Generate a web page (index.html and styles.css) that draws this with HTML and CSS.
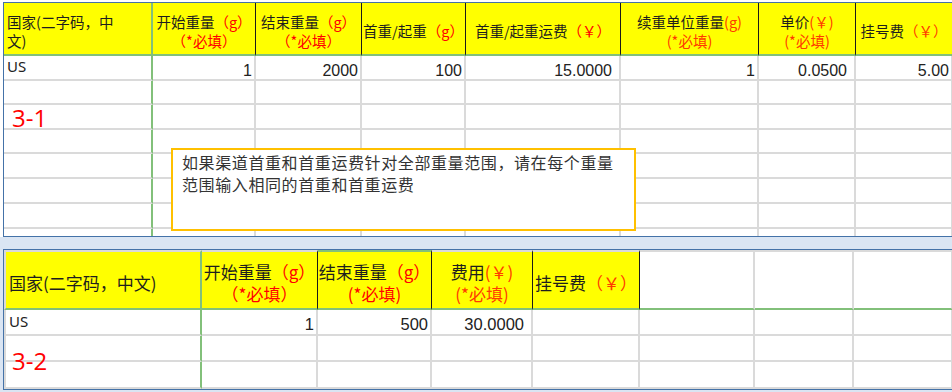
FILE: index.html
```html
<!DOCTYPE html>
<html lang="zh-CN">
<head>
<meta charset="utf-8">
<title>运费表</title>
<link rel="stylesheet" href="styles.css">
</head>
<body>
<div class="top-wrap">
  <div class="sheet sheet-1">
    <div class="grid grid-1">
      <div class="h first"><div class="ht"><div class="ln">国家(二字码，中</div><div class="ln">文)</div></div></div>
      <div class="h"><div class="ht"><div class="ln">开始重量<span class="r">（g）</span></div><div class="ln r">（*必填）</div></div></div>
      <div class="h"><div class="ht"><div class="ln">结束重量<span class="r">（g）</span></div><div class="ln r">（*必填）</div></div></div>
      <div class="h"><div class="ht"><div class="ln">首重/起重<span class="r">（g）</span></div></div></div>
      <div class="h"><div class="ht"><div class="ln">首重/起重运费<span class="r">（￥）</span></div></div></div>
      <div class="h"><div class="ht"><div class="ln">续重单位重量<span class="o">(g)</span></div><div class="ln o">(*必填)</div></div></div>
      <div class="h"><div class="ht"><div class="ln">单价<span class="o">(￥)</span></div><div class="ln o">(*必填)</div></div></div>
      <div class="h"><div class="ht"><div class="ln">挂号费<span class="o">（￥）</span></div></div></div>

      <div class="c g txt">US</div><div class="c n">1</div><div class="c n">2000</div><div class="c n">100</div><div class="c n dec">15.0000</div><div class="c n">1</div><div class="c n dec">0.0500</div><div class="c n">5.00</div>

      <div class="c g"></div><div class="c"></div><div class="c"></div><div class="c"></div><div class="c"></div><div class="c"></div><div class="c"></div><div class="c"></div>
      <div class="c g"></div><div class="c"></div><div class="c"></div><div class="c"></div><div class="c"></div><div class="c"></div><div class="c"></div><div class="c"></div>
      <div class="c g"></div><div class="c"></div><div class="c"></div><div class="c"></div><div class="c"></div><div class="c"></div><div class="c"></div><div class="c"></div>
      <div class="c g"></div><div class="c"></div><div class="c"></div><div class="c"></div><div class="c"></div><div class="c"></div><div class="c"></div><div class="c"></div>
      <div class="c g"></div><div class="c"></div><div class="c"></div><div class="c"></div><div class="c"></div><div class="c"></div><div class="c"></div><div class="c"></div>
      <div class="c g"></div><div class="c"></div><div class="c"></div><div class="c"></div><div class="c"></div><div class="c"></div><div class="c"></div><div class="c"></div>
      <div class="c g last"></div><div class="c last"></div><div class="c last"></div><div class="c last"></div><div class="c last"></div><div class="c last"></div><div class="c last"></div><div class="c last"></div>
    </div>
    <div class="label label-1">3-1</div>
    <div class="note"><div class="nl">如果渠道首重和首重运费针对全部重量范围，请在每个重量</div><div class="nl">范围输入相同的首重和首重运费</div></div>
  </div>
</div>

<div class="bottom-wrap">
  <div class="sheet sheet-2">
    <div class="grid grid-2">
      <div class="h h2 first edge"><div class="ht"><div class="ln">国家(二字码，中文)</div></div></div>
      <div class="h h2"><div class="ht"><div class="ln">开始重量<span class="r">（g）</span></div><div class="ln r">（*必填）</div></div></div>
      <div class="h h2 sel"><div class="ht"><div class="ln">结束重量<span class="r">（g）</span></div><div class="ln r">(*必填)</div></div></div>
      <div class="h h2"><div class="ht"><div class="ln">费用<span class="o">(￥)</span></div><div class="ln o">(*必填)</div></div></div>
      <div class="h h2"><div class="ht"><div class="ln">挂号费<span class="o">（￥）</span></div></div></div>
      <div class="h h2 blank"></div>
      <div class="h h2 blank"></div>
      <div class="h h2 blank"></div>

      <div class="c g edge txt txt2">US</div><div class="c n">1</div><div class="c n">500</div><div class="c n dec">30.0000</div><div class="c"></div><div class="c"></div><div class="c"></div><div class="c"></div>
      <div class="c g edge"></div><div class="c"></div><div class="c"></div><div class="c"></div><div class="c"></div><div class="c"></div><div class="c"></div><div class="c"></div>
      <div class="c g edge"></div><div class="c"></div><div class="c"></div><div class="c"></div><div class="c"></div><div class="c"></div><div class="c"></div><div class="c"></div>
    </div>
    <div class="label label-2">3-2</div>
  </div>
</div>
</body>
</html>
```

FILE: styles.css
```css
* {
  box-sizing: border-box;
}

html,
body {
  margin: 0;
  padding: 0;
}

body {
  width: 952px;
  height: 392px;
  overflow: hidden;
  background: #ffffff;
  font-family: "Noto Sans CJK SC", "Noto Sans", sans-serif;
  color: #222222;
}

.top-wrap {
  padding: 2px 0 0 3px;
  background: #ffffff;
}

.bottom-wrap {
  padding: 12px 0 2px 3px;
  background: #dae5f3;
}

.sheet {
  position: relative;
  width: 949px;
  overflow: hidden;
  background: #ffffff;
  border-left: 1px solid #4472a8;
  border-top: 1px solid #4472a8;
  border-bottom: 1px solid #4472a8;
}

.grid {
  display: grid;
}

.grid-1 {
  grid-template-columns: 149px 103px 106px 104px 155px 138px 97px 97px;
  grid-template-rows: 53px 25px 24px 25px 24px 25px 25px 25px 7px;
}

.grid-2 {
  grid-template-columns: 198px 116px 114px 101px 107px 115px 99px 99px;
  grid-template-rows: 60px 26px 26px 27px;
}

/* header cells */
.h {
  display: flex;
  align-items: center;
  justify-content: center;
  padding-top: 4px;
  background: #ffff00;
  border-right: 1px solid #1a1a1a;
  border-bottom: 2px solid #82c07a;
  font-size: 14.5px;
  color: #1e1e1e;
  white-space: nowrap;
  text-align: center;
}

.ht {
  display: flex;
  flex-direction: column;
  align-items: center;
}

.ln {
  height: 19px;
  line-height: 19px;
  overflow: visible;
}

.h.first {
  justify-content: flex-start;
  text-align: left;
  padding-left: 3px;
  border-right: 2px solid #82c07a;
}

.h.first .ht {
  align-items: flex-start;
}

.h2 {
  font-size: 17px;
  padding-top: 5px;
  border-top: 2px solid #dadada;
}

.h2 .ln {
  height: 22px;
  line-height: 22px;
}

.h2.sel {
  border-top-color: #82c07a;
}

.h2.blank {
  background: #ffffff;
  border-right: 2px solid #dadada;
}

.r {
  color: #ff0000;
}

.o {
  color: #ff3a00;
}

/* data cells */
.c {
  border-right: 2px solid #dadada;
  border-bottom: 2px solid #dadada;
  white-space: nowrap;
}

.c.g {
  border-right-color: #82c07a;
}

.edge {
  border-left: 2px solid #dadada;
}

.c.last {
  border-bottom: none;
}

.txt {
  font-family: "Noto Sans", sans-serif;
  font-size: 15px;
  line-height: 20px;
  padding-left: 3px;
  color: #222222;
}

.txt2 {
  padding-top: 1px;
}

.n {
  font-family: "Liberation Sans", Arial, sans-serif;
  font-size: 16px;
  line-height: 19px;
  padding-top: 5px;
  padding-right: 2px;
  text-align: right;
  color: #222222;
}

.grid-2 .n {
  font-size: 16.5px;
}

.n.dec {
  padding-right: 7px;
}

/* floating text boxes */
.label {
  position: absolute;
  font-family: "Open Sans", "Noto Sans", sans-serif;
  font-size: 24px;
  line-height: 25px;
  color: #ff0000;
}

.label-1 {
  left: 8px;
  top: 102px;
}

.label-2 {
  left: 8px;
  top: 98px;
}

.note {
  position: absolute;
  left: 167px;
  top: 145px;
  width: 465px;
  height: 83px;
  padding: 1px 0 0 9px;
  background: #ffffff;
  border: 2px solid #ffc000;
  font-size: 16px;
  letter-spacing: 0.6px;
  color: #333333;
  white-space: nowrap;
}

.nl {
  height: 22px;
  line-height: 22px;
}
```
